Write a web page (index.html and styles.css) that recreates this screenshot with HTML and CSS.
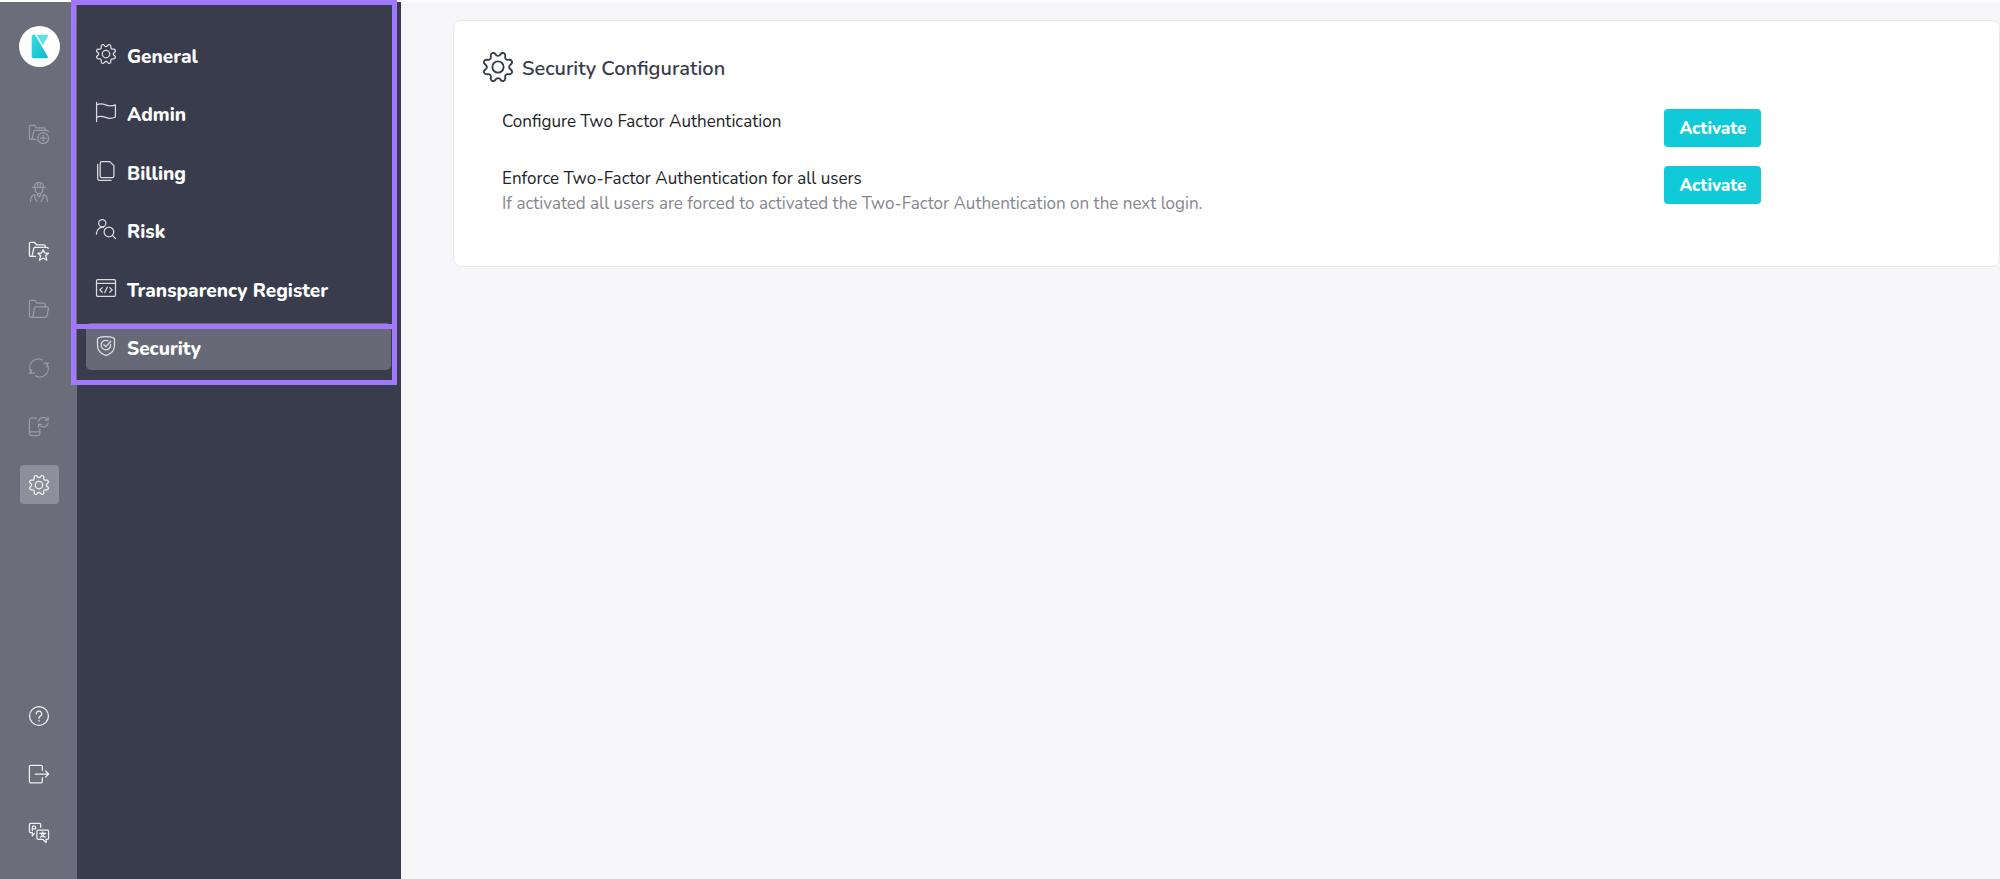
FILE: index.html
```html
<!DOCTYPE html>
<html lang="en">
<head>
    <meta charset="UTF-8">
    <meta name="viewport" content="width=device-width, initial-scale=1.0">
    <title>Security Configuration</title>
    <link rel="stylesheet" href="styles.css">
</head>
<body>

    <!-- Shared icons -->
    <svg class="sprite" aria-hidden="true">
        <symbol id="cog" viewBox="0 0 24 24">
            <path d="M10.546,2.438a1.957,1.957,0,0,0,2.908,0L14.4,1.4a1.959,1.959,0,0,1,3.41,1.413l-.071,1.4A1.958,1.958,0,0,0,19.79,6.266l1.4-.071A1.959,1.959,0,0,1,22.6,9.6l-1.042.94a1.96,1.96,0,0,0,0,2.909l1.042.94a1.959,1.959,0,0,1-1.413,3.41l-1.4-.071a1.958,1.958,0,0,0-2.056,2.056l.071,1.4A1.959,1.959,0,0,1,14.4,22.6l-.941-1.041a1.959,1.959,0,0,0-2.908,0L9.606,22.6A1.959,1.959,0,0,1,6.2,21.192l.072-1.4a1.958,1.958,0,0,0-2.056-2.056l-1.4.071A1.958,1.958,0,0,1,1.4,14.4l1.041-.94a1.96,1.96,0,0,0,0-2.909L1.4,9.606A1.958,1.958,0,0,1,2.809,6.2l1.4.071A1.958,1.958,0,0,0,6.267,4.211L6.2,2.81A1.959,1.959,0,0,1,9.606,1.4Z"/>
            <circle cx="12" cy="12" r="4.5"/>
        </symbol>
    </svg>

    <div class="app">
        <!-- Icon rail -->
        <nav class="rail" aria-label="Main">
            <a class="logo" href="#" aria-label="Home">
                <svg viewBox="0 0 42 42">
                    <defs>
                        <linearGradient id="teal" x1="0" y1="0" x2="1" y2="1">
                            <stop offset="0" stop-color="#3cd9e2"/>
                            <stop offset="1" stop-color="#0cbccb"/>
                        </linearGradient>
                    </defs>
                    <circle cx="21" cy="21" r="21" fill="#fff"/>
                    <path d="M15 9h1.500L29.500 31.500Q30 33 28.500 33H15Q13 33 13 31V11Q13 9 15 9z" fill="url(#teal)"/>
                    <path d="M18 9H28.500Q30.500 9 29.500 11L24.500 19.500z" fill="#5ce3e8"/>
                </svg>
            </a>
            <ul class="rail-list">
                <li><a class="rail-link dim" href="#" aria-label="New case">
                    <svg class="icon" viewBox="0 0 24 24">
                        <path d="M3.500 18.500H2A1.500 1.500 0 0 1 .5 17V3A1.500 1.500 0 0 1 2 1.500h4.500L9 4.500h9A1.500 1.500 0 0 1 19.500 6v1.500"/>
                        <path d="M3.500 18.500 5.700 9a2 2 0 0 1 2-1.500H21.500a1.500 1.500 0 0 1 1.500 1.500M3.500 18.500H8"/>
                        <circle cx="17" cy="17" r="6.500"/>
                        <path d="M17 13.500v7M13.500 17h7"/>
                    </svg>
                </a></li>
                <li><a class="rail-link dim" href="#" aria-label="Agents">
                    <svg class="icon" viewBox="0 0 24 24">
                        <path d="M4.500 6.500h15M6.500 6.500V6a5.500 5.500 0 0 1 11 0v.5M10.500 1v3.500M13.500 1v3.500"/>
                        <path d="M7.500 7v2.500a4.500 4.500 0 0 0 9 0V7M10 13.500v2l2 2.500 2-2.500v-2"/>
                        <path d="M2 23.500v-2a6.500 6.500 0 0 1 5-6.300M22 23.500v-2a6.500 6.500 0 0 0-5-6.300M7 15.200v4l2.500 4.300M17 15.200v4l-2.500 4.300"/>
                    </svg>
                </a></li>
                <li><a class="rail-link" href="#" aria-label="Favourite cases">
                    <svg class="icon" viewBox="0 0 24 24">
                        <path d="M3.500 18.500H2A1.500 1.500 0 0 1 .5 17V3A1.500 1.500 0 0 1 2 1.500h4.500L9 4.500h9A1.500 1.500 0 0 1 19.500 6v1.500"/>
                        <path d="M3.500 18.500 5.700 9a2 2 0 0 1 2-1.500H21.500a1.500 1.500 0 0 1 1.500 1.500M3.500 18.500H8"/>
                        <path d="m17 10.500 2 4h4.500l-3.500 3.200 1.500 5.300-4.500-2.700-4.500 2.700 1.500-5.300-3.500-3.200H15z"/>
                    </svg>
                </a></li>
                <li><a class="rail-link dim" href="#" aria-label="Cases">
                    <svg class="icon" viewBox="0 0 24 24">
                        <path d="M3 22H2A1.500 1.500 0 0 1 .5 20.500V3A1.500 1.500 0 0 1 2 1.500h5L9.500 5H18A1.500 1.500 0 0 1 19.500 6.500v3"/>
                        <path d="M3 22a2 2 0 0 0 1.800-1.500L6.600 11A2 2 0 0 1 8.500 9.500h13a1.800 1.800 0 0 1 1.800 2.200L21.500 20.500A2 2 0 0 1 19.500 22z"/>
                    </svg>
                </a></li>
                <li><a class="rail-link dim" href="#" aria-label="Monitoring">
                    <svg class="icon" viewBox="0 0 24 24">
                        <path d="M2.500 17A10.200 10.200 0 0 1 16 2.500M21.500 7A10.200 10.200 0 0 1 8 21.500"/>
                        <path d="M17.500 6h6M21.500 6v4.500M.5 18h6M2.500 18v-4"/>
                    </svg>
                </a></li>
                <li><a class="rail-link dim" href="#" aria-label="Device sync">
                    <svg class="icon" viewBox="0 0 24 24">
                        <path d="M8.500 2.500H3A2.500 2.500 0 0 0 .5 5v16A2.500 2.500 0 0 0 3 23.500h7.500A2.500 2.500 0 0 0 13 21v-5.500M.5 19H13"/>
                        <path d="M11.500 6a5.800 5.800 0 0 1 10.500-1.500M23 1.500V5h-3.500M23 8.500A5.800 5.800 0 0 1 12.500 10.500M11.500 13.500V10h3.500"/>
                    </svg>
                </a></li>
                <li><a class="rail-link active" href="#" aria-label="Settings" aria-current="page">
                    <svg class="icon"><use href="#cog"/></svg>
                </a></li>
            </ul>
            <ul class="rail-list rail-bottom">
                <li><a class="rail-link" href="#" aria-label="Help">
                    <svg class="icon" viewBox="0 0 24 24">
                        <circle cx="12" cy="12" r="11.300"/>
                        <path d="M8.800 9.500A3.200 3.200 0 1 1 13.500 12.200Q12 13 12 14.800M12 17.300v.7"/>
                    </svg>
                </a></li>
                <li><a class="rail-link" href="#" aria-label="Log out">
                    <svg class="icon" viewBox="0 0 24 24">
                        <path d="M16 7.500V3a1.500 1.500 0 0 0-1.500-1.500H2A1.500 1.500 0 0 0 .5 3v18A1.500 1.500 0 0 0 2 22.500h12.500A1.500 1.500 0 0 0 16 21v-4.500"/>
                        <path d="M7.500 12h16M19.800 8.200 23.500 12l-3.700 3.800"/>
                    </svg>
                </a></li>
                <li><a class="rail-link" href="#" aria-label="Language">
                    <svg class="icon" viewBox="0 0 24 24">
                        <path d="M6.500 12.500 4 15.500v-4H2A1.500 1.500 0 0 1 .5 10V2A1.500 1.500 0 0 1 2 .5h10.500A1.500 1.500 0 0 1 14 2v3"/>
                        <path d="M11 8.500h11a1.500 1.500 0 0 1 1.500 1.500v8a1.500 1.500 0 0 1-1.500 1.500h-1.500v4l-4-4H11A1.500 1.500 0 0 1 9.500 18v-8A1.500 1.500 0 0 1 11 8.500z"/>
                        <path d="M4 9V5.500a2 2 0 0 1 4 0V7M4 7h4M16.500 10.500v1.500M13 12.500h7M18.500 12.500q-1 3.500-5 4.500M14.500 12.500q1 3.500 5 4.500"/>
                    </svg>
                </a></li>
            </ul>
        </nav>

        <!-- Settings menu -->
        <nav class="menu" aria-label="Settings">
            <ul class="menu-list">
                <li><a class="menu-link" href="#">
                    <svg class="icon"><use href="#cog"/></svg>
                    <span>General</span>
                </a></li>
                <li><a class="menu-link" href="#">
                    <svg class="icon" viewBox="0 0 24 24">
                        <path d="M.7 .5v23M.7 3.500Q5.500 1 11.500 3.500T23.300 3.500V18Q18 21 11.500 18.500T.7 18.500"/>
                    </svg>
                    <span>Admin</span>
                </a></li>
                <li><a class="menu-link" href="#">
                    <svg class="icon" viewBox="0 0 24 24">
                        <path d="M7 .7h9.500L21.500 5.500V18a2 2 0 0 1-2 2H7a2 2 0 0 1-2-2V2.700a2 2 0 0 1 2-2z"/>
                        <path d="M2 4v17a2.300 2.300 0 0 0 2.300 2.300H18"/>
                    </svg>
                    <span>Billing</span>
                </a></li>
                <li><a class="menu-link" href="#">
                    <svg class="icon" viewBox="0 0 24 24">
                        <circle cx="7.500" cy="5" r="4.300"/>
                        <path d="M.6 18v-1a7 7 0 0 1 8.500-6.800"/>
                        <circle cx="15.500" cy="15.500" r="5.800"/>
                        <path d="m19.700 19.700 3.800 3.800"/>
                    </svg>
                    <span>Risk</span>
                </a></li>
                <li><a class="menu-link" href="#">
                    <svg class="icon" viewBox="0 0 24 24">
                        <rect x=".6" y="2" width="22.800" height="20" rx="1.500"/>
                        <path d="M.6 6.500h22.800M7.500 11.500l-3 2.800 3 2.800M16.500 11.500l3 2.800-3 2.800M13.500 11l-3 6.500"/>
                    </svg>
                    <span>Transparency Register</span>
                </a></li>
                <li><a class="menu-link active" href="#" aria-current="page">
                    <svg class="icon" viewBox="0 0 24 24">
                        <path d="M12 .6q5 0 9 1.600 1.200.4 1.200 1.600v7.500q0 8.500-10.200 12.200Q1.800 19.800 1.800 11.300V3.800Q1.800 2.600 3 2.200 7 .6 12 .6z"/>
                        <path d="M14.500 5.800A5.700 5.700 0 1 0 17.500 10M9.300 10.300l2.500 2.500 6-6.500"/>
                    </svg>
                    <span>Security</span>
                </a></li>
            </ul>
            <div class="marker marker-menu"></div>
            <div class="marker marker-current"></div>
        </nav>

        <!-- Content -->
        <main class="content">
            <section class="card">
                <h1 class="card-title">
                    <svg class="icon icon-large"><use href="#cog"/></svg>
                    <span>Security Configuration</span>
                </h1>
                <div class="setting">
                    <p id="configure">Configure Two Factor Authentication</p>
                    <button type="button" aria-describedby="configure">Activate</button>
                </div>
                <div class="setting">
                    <div>
                        <p id="enforce">Enforce Two-Factor Authentication for all users</p>
                        <p class="hint">If activated all users are forced to activated the Two-Factor Authentication on the next login.</p>
                    </div>
                    <button type="button" aria-describedby="enforce">Activate</button>
                </div>
            </section>
        </main>
    </div>

</body>
</html>
```
FILE: styles.css
```css
* {
    box-sizing: border-box;
}

body {
    margin: 0;
    font-family: Nunito, Lato, sans-serif;
    font-size: 17px;
    line-height: 25px;
    color: #222226;
    background-color: #f6f6f9;
}

ul, p, h1 {
    margin: 0;
    padding: 0;
    list-style: none;
}

a {
    color: inherit;
    text-decoration: none;
}

.sprite {
    display: none;
}

.app {
    display: flex;
    min-height: 100vh;
    border-top: 2px solid white;
}

/* Icons */
.icon {
    display: block;
    flex: none;
    width: 20px;
    height: 20px;
    fill: none;
    stroke: currentColor;
    stroke-width: 1.5;
    stroke-linecap: round;
    stroke-linejoin: round;
    overflow: visible;
}

.icon-large {
    width: 30px;
    height: 30px;
}

/* Icon rail */
.rail {
    display: flex;
    flex-direction: column;
    align-items: center;
    flex: none;
    width: 77px;
    padding: 24px 0 27px 1px;
    background-color: #6b6e7a;
    color: #f0f0f2;
}

.logo svg {
    display: block;
    width: 41px;
    height: 41px;
}

.rail-list {
    display: flex;
    flex-direction: column;
    justify-content: space-between;
    min-height: 390px;
    margin-top: 47px;
}

.rail-bottom {
    min-height: 156px;
    margin-top: auto;
}

.rail-link {
    display: flex;
    align-items: center;
    justify-content: center;
    width: 39px;
    height: 39px;
    border-radius: 4px;
}

.rail-link.dim {
    color: #9a9ca5;
}

.rail-link.active {
    background-color: #8d909a;
}

/* Settings menu */
.menu {
    position: relative;
    flex: none;
    width: 324px;
    padding: 29px 10px 0 9px;
    background-color: #393c4c;
    color: white;
}

.menu-list {
    display: flex;
    flex-direction: column;
    justify-content: space-between;
    min-height: 339px;
}

.menu-link {
    display: flex;
    gap: 11px;
    height: 47px;
    padding: 13px 10px 0;
    border-radius: 5px;
    font-size: 19px;
    font-weight: 800;
    line-height: 27px;
}

.menu-link .icon {
    color: #dcdce0;
}

.menu-link.active {
    background-color: #676a76;
}

/* Highlight frames over the menu */
.marker {
    position: absolute;
    left: -6px;
    right: 4px;
    border: 5px solid #a077ff;
}

.marker-menu {
    top: -2px;
    height: 329px;
}

.marker-current {
    top: 322px;
    height: 61px;
}

/* Content */
.content {
    flex: 1;
    padding: 18px 0 0 52px;
}

.card {
    padding: 31px 44px 31px 29px;
    background-color: white;
    border: 1px solid #e9e9ec;
    border-radius: 8px;
}

.card-title {
    display: flex;
    gap: 9px;
    margin-bottom: 23px;
    font-size: 20px;
    font-weight: 600;
    line-height: 34px;
    color: #393c4c;
}

.setting {
    display: grid;
    grid-template-columns: 4fr 1fr;
    align-items: start;
    margin-bottom: 19px;
    padding-left: 19px;
}

.hint {
    color: #85868c;
}

.setting button {
    justify-self: start;
    padding: 7px 15px 5px;
    border: none;
    border-radius: 4px;
    background-color: #11cad8;
    color: white;
    font-family: inherit;
    font-size: 17px;
    font-weight: 800;
    line-height: 26px;
    cursor: pointer;
}
```
